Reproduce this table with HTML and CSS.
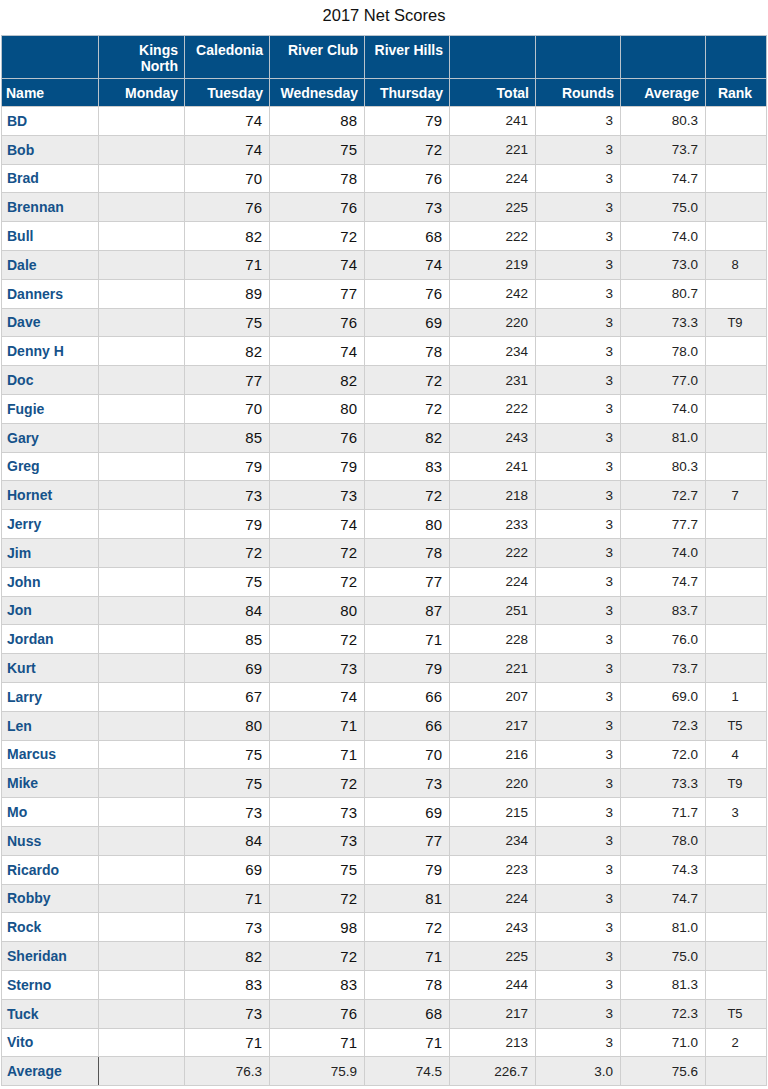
FILE: index.html
```html
<!DOCTYPE html>
<html>
<head>
<meta charset="utf-8">
<link rel="stylesheet" href="styles.css">
</head>
<body>
<div class="title">2017 Net Scores</div>
<table class="scores">
<colgroup>
<col class="c-name"><col class="c-mon"><col class="c-tue"><col class="c-wed"><col class="c-thu"><col class="c-tot"><col class="c-rnd"><col class="c-avg"><col class="c-rank">
</colgroup>
<thead>
<tr class="h1"><th></th><th class="r">Kings<br>North</th><th class="r">Caledonia</th><th class="r">River Club</th><th class="r">River Hills</th><th></th><th></th><th></th><th></th></tr>
<tr class="h2"><th class="l">Name</th><th class="r">Monday</th><th class="r">Tuesday</th><th class="r">Wednesday</th><th class="r">Thursday</th><th class="r">Total</th><th class="r">Rounds</th><th class="r">Average</th><th class="c">Rank</th></tr>
</thead>
<tbody>
<tr><td class="name">BD</td><td class="sc"></td><td class="sc">74</td><td class="sc">88</td><td class="sc">79</td><td class="num">241</td><td class="num">3</td><td class="num">80.3</td><td class="rank"></td></tr>
<tr><td class="name">Bob</td><td class="sc"></td><td class="sc">74</td><td class="sc">75</td><td class="sc">72</td><td class="num">221</td><td class="num">3</td><td class="num">73.7</td><td class="rank"></td></tr>
<tr><td class="name">Brad</td><td class="sc"></td><td class="sc">70</td><td class="sc">78</td><td class="sc">76</td><td class="num">224</td><td class="num">3</td><td class="num">74.7</td><td class="rank"></td></tr>
<tr><td class="name">Brennan</td><td class="sc"></td><td class="sc">76</td><td class="sc">76</td><td class="sc">73</td><td class="num">225</td><td class="num">3</td><td class="num">75.0</td><td class="rank"></td></tr>
<tr><td class="name">Bull</td><td class="sc"></td><td class="sc">82</td><td class="sc">72</td><td class="sc">68</td><td class="num">222</td><td class="num">3</td><td class="num">74.0</td><td class="rank"></td></tr>
<tr><td class="name">Dale</td><td class="sc"></td><td class="sc">71</td><td class="sc">74</td><td class="sc">74</td><td class="num">219</td><td class="num">3</td><td class="num">73.0</td><td class="rank">8</td></tr>
<tr><td class="name">Danners</td><td class="sc"></td><td class="sc">89</td><td class="sc">77</td><td class="sc">76</td><td class="num">242</td><td class="num">3</td><td class="num">80.7</td><td class="rank"></td></tr>
<tr><td class="name">Dave</td><td class="sc"></td><td class="sc">75</td><td class="sc">76</td><td class="sc">69</td><td class="num">220</td><td class="num">3</td><td class="num">73.3</td><td class="rank">T9</td></tr>
<tr><td class="name">Denny H</td><td class="sc"></td><td class="sc">82</td><td class="sc">74</td><td class="sc">78</td><td class="num">234</td><td class="num">3</td><td class="num">78.0</td><td class="rank"></td></tr>
<tr><td class="name">Doc</td><td class="sc"></td><td class="sc">77</td><td class="sc">82</td><td class="sc">72</td><td class="num">231</td><td class="num">3</td><td class="num">77.0</td><td class="rank"></td></tr>
<tr><td class="name">Fugie</td><td class="sc"></td><td class="sc">70</td><td class="sc">80</td><td class="sc">72</td><td class="num">222</td><td class="num">3</td><td class="num">74.0</td><td class="rank"></td></tr>
<tr><td class="name">Gary</td><td class="sc"></td><td class="sc">85</td><td class="sc">76</td><td class="sc">82</td><td class="num">243</td><td class="num">3</td><td class="num">81.0</td><td class="rank"></td></tr>
<tr><td class="name">Greg</td><td class="sc"></td><td class="sc">79</td><td class="sc">79</td><td class="sc">83</td><td class="num">241</td><td class="num">3</td><td class="num">80.3</td><td class="rank"></td></tr>
<tr><td class="name">Hornet</td><td class="sc"></td><td class="sc">73</td><td class="sc">73</td><td class="sc">72</td><td class="num">218</td><td class="num">3</td><td class="num">72.7</td><td class="rank">7</td></tr>
<tr><td class="name">Jerry</td><td class="sc"></td><td class="sc">79</td><td class="sc">74</td><td class="sc">80</td><td class="num">233</td><td class="num">3</td><td class="num">77.7</td><td class="rank"></td></tr>
<tr><td class="name">Jim</td><td class="sc"></td><td class="sc">72</td><td class="sc">72</td><td class="sc">78</td><td class="num">222</td><td class="num">3</td><td class="num">74.0</td><td class="rank"></td></tr>
<tr><td class="name">John</td><td class="sc"></td><td class="sc">75</td><td class="sc">72</td><td class="sc">77</td><td class="num">224</td><td class="num">3</td><td class="num">74.7</td><td class="rank"></td></tr>
<tr><td class="name">Jon</td><td class="sc"></td><td class="sc">84</td><td class="sc">80</td><td class="sc">87</td><td class="num">251</td><td class="num">3</td><td class="num">83.7</td><td class="rank"></td></tr>
<tr><td class="name">Jordan</td><td class="sc"></td><td class="sc">85</td><td class="sc">72</td><td class="sc">71</td><td class="num">228</td><td class="num">3</td><td class="num">76.0</td><td class="rank"></td></tr>
<tr><td class="name">Kurt</td><td class="sc"></td><td class="sc">69</td><td class="sc">73</td><td class="sc">79</td><td class="num">221</td><td class="num">3</td><td class="num">73.7</td><td class="rank"></td></tr>
<tr><td class="name">Larry</td><td class="sc"></td><td class="sc">67</td><td class="sc">74</td><td class="sc">66</td><td class="num">207</td><td class="num">3</td><td class="num">69.0</td><td class="rank">1</td></tr>
<tr><td class="name">Len</td><td class="sc"></td><td class="sc">80</td><td class="sc">71</td><td class="sc">66</td><td class="num">217</td><td class="num">3</td><td class="num">72.3</td><td class="rank">T5</td></tr>
<tr><td class="name">Marcus</td><td class="sc"></td><td class="sc">75</td><td class="sc">71</td><td class="sc">70</td><td class="num">216</td><td class="num">3</td><td class="num">72.0</td><td class="rank">4</td></tr>
<tr><td class="name">Mike</td><td class="sc"></td><td class="sc">75</td><td class="sc">72</td><td class="sc">73</td><td class="num">220</td><td class="num">3</td><td class="num">73.3</td><td class="rank">T9</td></tr>
<tr><td class="name">Mo</td><td class="sc"></td><td class="sc">73</td><td class="sc">73</td><td class="sc">69</td><td class="num">215</td><td class="num">3</td><td class="num">71.7</td><td class="rank">3</td></tr>
<tr><td class="name">Nuss</td><td class="sc"></td><td class="sc">84</td><td class="sc">73</td><td class="sc">77</td><td class="num">234</td><td class="num">3</td><td class="num">78.0</td><td class="rank"></td></tr>
<tr><td class="name">Ricardo</td><td class="sc"></td><td class="sc">69</td><td class="sc">75</td><td class="sc">79</td><td class="num">223</td><td class="num">3</td><td class="num">74.3</td><td class="rank"></td></tr>
<tr><td class="name">Robby</td><td class="sc"></td><td class="sc">71</td><td class="sc">72</td><td class="sc">81</td><td class="num">224</td><td class="num">3</td><td class="num">74.7</td><td class="rank"></td></tr>
<tr><td class="name">Rock</td><td class="sc"></td><td class="sc">73</td><td class="sc">98</td><td class="sc">72</td><td class="num">243</td><td class="num">3</td><td class="num">81.0</td><td class="rank"></td></tr>
<tr><td class="name">Sheridan</td><td class="sc"></td><td class="sc">82</td><td class="sc">72</td><td class="sc">71</td><td class="num">225</td><td class="num">3</td><td class="num">75.0</td><td class="rank"></td></tr>
<tr><td class="name">Sterno</td><td class="sc"></td><td class="sc">83</td><td class="sc">83</td><td class="sc">78</td><td class="num">244</td><td class="num">3</td><td class="num">81.3</td><td class="rank"></td></tr>
<tr><td class="name">Tuck</td><td class="sc"></td><td class="sc">73</td><td class="sc">76</td><td class="sc">68</td><td class="num">217</td><td class="num">3</td><td class="num">72.3</td><td class="rank">T5</td></tr>
<tr><td class="name">Vito</td><td class="sc"></td><td class="sc">71</td><td class="sc">71</td><td class="sc">71</td><td class="num">213</td><td class="num">3</td><td class="num">71.0</td><td class="rank">2</td></tr>
<tr class="avg"><td class="name avg-name">Average</td><td class="num"></td><td class="num">76.3</td><td class="num">75.9</td><td class="num">74.5</td><td class="num">226.7</td><td class="num">3.0</td><td class="num">75.6</td><td class="rank"></td></tr>
</tbody>
</table>
</body>
</html>
```
FILE: styles.css
```css
html, body {
  margin: 0;
  padding: 0;
  background: #ffffff;
}
body {
  font-family: "Liberation Sans", Arial, sans-serif;
  color: #111111;
  padding: 0 1px;
}
.title {
  text-align: center;
  font-size: 16.5px;
  line-height: 20px;
  padding-top: 5px;
  height: 30px;
  box-sizing: border-box;
  color: #111;
}
.scores {
  border-collapse: collapse;
  table-layout: fixed;
  width: 766px;
  margin-top: 5px;
}
.c-name { width: 97px; }
.c-mon { width: 86px; }
.c-tue { width: 85px; }
.c-wed { width: 95px; }
.c-thu { width: 85px; }
.c-tot { width: 86px; }
.c-rnd { width: 85px; }
.c-avg { width: 85px; }
.c-rank { width: 61px; }
th {
  background: #034e85;
  color: #ffffff;
  font-size: 14px;
  font-weight: bold;
  line-height: 16px;
  border: 1px solid #b9c3cc;
  padding: 0 6px 0 4px;
  vertical-align: top;
}
.h1 th {
  height: 43px;
  padding-top: 6px;
  box-sizing: border-box;
}
.h2 th {
  height: 28px;
  padding-top: 6px;
  box-sizing: border-box;
  border-bottom: 1px solid #cccccc;
}
th.r { text-align: right; }
th.l { text-align: left; }
th.c { text-align: center; }
td {
  border: 1px solid #cfcfcf;
  height: 28.8px;
  box-sizing: border-box;
  padding: 0 7px 0 5px;
  vertical-align: middle;
}
tbody tr:nth-child(even) td { background: #ececec; }
.name {
  font-weight: bold;
  font-size: 14px;
  color: #15528a;
  text-align: left;
}
.sc {
  text-align: right;
  font-size: 15px;
  color: #111;
}
.num {
  text-align: right;
  font-size: 13.5px;
  color: #222;
}
.rank {
  text-align: center;
  font-size: 13px;
  color: #222;
}
.avg td { background: #ececec; }
.avg-name { border-right: 1px solid #555555; }
```
